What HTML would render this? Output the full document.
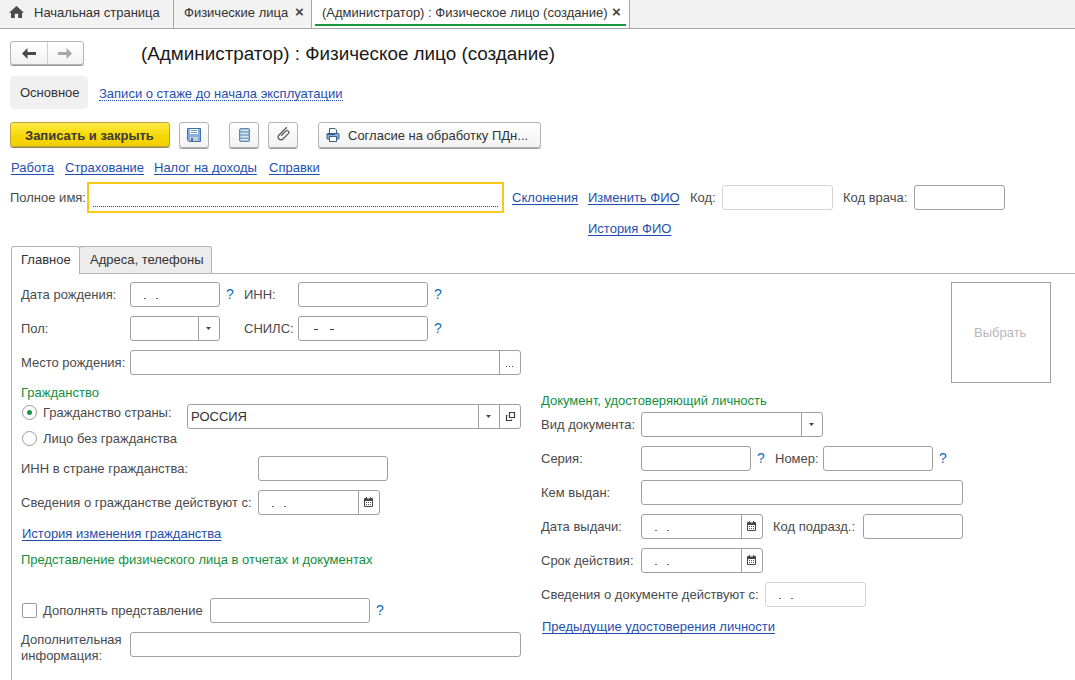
<!DOCTYPE html>
<html><head><meta charset="utf-8">
<style>
*{box-sizing:border-box;margin:0;padding:0}
html,body{width:1075px;height:680px;overflow:hidden;background:#fff}
body{position:relative;font-family:"Liberation Sans",sans-serif;font-size:13px;color:#4a4a4a}
.a{position:absolute;white-space:nowrap;line-height:16px}
.lnk{color:#1f4fae;text-decoration:underline;text-underline-offset:2px;text-decoration-skip-ink:none}
.grn{color:#10903f}
.q{color:#0f6cc2;font-size:14px}
.inp{position:absolute;border:1px solid #a0a0a0;border-radius:3px;background:#fff}
.dd{position:absolute;top:0;bottom:0;border-left:1px solid #a0a0a0}
.btn{position:absolute;border:1px solid #b4b4b4;border-radius:3px;background:linear-gradient(#fff,#f2f2f2);box-shadow:0 1px 0 #9a9a9a}
.dot{position:absolute;width:2px;height:1px;background:#6a6a6a}
.tri{position:absolute;left:7px;top:10px;width:5px;height:3px;background:#444;clip-path:polygon(0 0,100% 0,50% 100%)}
</style></head><body>

<!-- tab bar -->
<div style="position:absolute;left:0;top:0;width:1075px;height:29px;background:#f2f2f2;border-bottom:1px solid #a6a6a6"></div>
<div style="position:absolute;left:312px;top:0;width:317px;height:28px;background:#fff"></div>
<div style="position:absolute;left:173px;top:0;width:1px;height:28px;background:#a6a6a6"></div>
<div style="position:absolute;left:311px;top:0;width:1px;height:28px;background:#a6a6a6"></div>
<div style="position:absolute;left:629px;top:0;width:1px;height:28px;background:#a6a6a6"></div>
<div style="position:absolute;left:315px;top:24px;width:311px;height:2px;background:#1a9642"></div>
<svg style="position:absolute;left:9px;top:6px" width="15" height="12" viewBox="0 0 15 12"><path d="M7.5 0 L15 6.8 H13 V12 H9.2 V7.7 H5.8 V12 H2 V6.8 H0 Z" fill="#4a4a4a"/></svg>
<div class="a" style="left:34px;top:5px;color:#333">Начальная страница</div>
<div class="a" style="left:184px;top:5px;color:#333">Физические лица</div>
<div class="a" style="left:295px;top:4px;color:#444;font-size:15px;font-weight:bold">×</div>
<div class="a" style="left:322px;top:5px;color:#333">(Администратор) : Физическое лицо (создание)</div>
<div class="a" style="left:612px;top:4px;color:#444;font-size:15px;font-weight:bold">×</div>

<!-- nav -->
<div class="btn" style="left:10px;top:41px;width:74px;height:24px"></div>
<div style="position:absolute;left:47px;top:42px;width:1px;height:22px;background:#d0d0d0"></div>
<svg style="position:absolute;left:22px;top:48px" width="14" height="11" viewBox="0 0 14 11"><path d="M0 5.5 L5.5 0 V4 H14 V7 H5.5 V11 Z" fill="#4a4a4a"/></svg>
<svg style="position:absolute;left:58px;top:48px" width="14" height="11" viewBox="0 0 14 11"><path d="M14 5.5 L8.5 0 V4 H0 V7 H8.5 V11 Z" fill="#a6a6a6"/></svg>
<div class="a" style="left:141px;top:43px;font-size:18.85px;line-height:22px;color:#1a1a1a">(Администратор) : Физическое лицо (создание)</div>

<div style="position:absolute;left:10px;top:76px;width:78px;height:33px;background:#f0f0f0;border-radius:4px"></div>
<div class="a" style="left:20px;top:85px;color:#333">Основное</div>
<div class="a" style="left:99px;top:87px;color:#1f4fae;border-bottom:1px dotted #1f4fae;line-height:13px">Записи о стаже до начала эксплуатации</div>

<!-- command bar -->
<div style="position:absolute;left:10px;top:122px;width:160px;height:25px;border:1px solid #bba23a;border-radius:3px;background:linear-gradient(#ffec4a,#f7d600 60%,#f2d000);box-shadow:0 1px 0 #9a8a50"></div>
<div class="a" style="left:25px;top:128px;font-weight:bold;color:#3a3a3a">Записать и закрыть</div>
<div class="btn" style="left:179px;top:122px;width:30px;height:26px"></div>
<div class="btn" style="left:229px;top:122px;width:30px;height:26px"></div>
<div class="btn" style="left:268px;top:122px;width:30px;height:26px"></div>
<div class="btn" style="left:318px;top:122px;width:223px;height:26px"></div>

<svg style="position:absolute;left:187px;top:128px" width="14" height="14" viewBox="0 0 14 14">
<path d="M0.5 0.5 H13.5 V13.5 H2 L0.5 12 Z" fill="#86aee6" stroke="#3f6eb0" stroke-width="1"/>
<rect x="3" y="1" width="8" height="5" fill="#fff"/>
<rect x="4" y="2" width="6" height="1" fill="#7b97b8"/>
<rect x="4" y="4" width="6" height="1" fill="#7b97b8"/>
<rect x="3" y="9" width="8" height="4" fill="#c9cfcb"/>
<rect x="4" y="10" width="2" height="3" fill="#3f6eb0"/>
</svg>
<svg style="position:absolute;left:239px;top:128px" width="11" height="14" viewBox="0 0 11 14">
<rect x="0.5" y="0.5" width="10" height="13" rx="1.5" fill="#86a6c6" stroke="#5f86ad"/>
<rect x="1.5" y="1.5" width="8" height="1.6" fill="#d2e4f5"/>
<rect x="1.5" y="4.7" width="8" height="1.6" fill="#d2e4f5"/>
<rect x="1.5" y="7.9" width="8" height="1.6" fill="#d2e4f5"/>
<rect x="1.5" y="11" width="8" height="1.6" fill="#d2e4f5"/>
</svg>
<svg style="position:absolute;left:276px;top:127px" width="15" height="15" viewBox="-7.5 -7.5 15 15">
<path transform="rotate(45)" d="M-2.8 -7.5 V3.5 A2.8 2.8 0 0 0 2.8 3.5 V-4 A1.8 1.8 0 0 0 -0.8 -4 V2.5" fill="none" stroke="#5a5a5a" stroke-width="1.3"/>
</svg>
<svg style="position:absolute;left:326px;top:128px" width="14" height="14" viewBox="0 0 14 14">
<path d="M3.5 5 V0.5 H9 L10.5 2 V5" fill="#fff" stroke="#3b6289" stroke-width="1"/>
<rect x="0.5" y="5" width="13" height="6.5" rx="1.5" fill="#2f5f8f"/>
<rect x="1.5" y="7" width="11" height="3.5" fill="#8fb1d2"/>
<rect x="9.5" y="6" width="1" height="1" fill="#fff"/><rect x="11.5" y="6" width="1" height="1" fill="#fff"/>
<rect x="3.5" y="8.5" width="7" height="5" fill="#fff" stroke="#3b6289" stroke-width="1"/>
</svg>
<div class="a" style="left:348px;top:128px;color:#333">Согласие на обработку ПДн...</div>

<!-- links -->
<div class="a lnk" style="left:11px;top:160px">Работа</div>
<div class="a lnk" style="left:65px;top:160px">Страхование</div>
<div class="a lnk" style="left:154px;top:160px">Налог на доходы</div>
<div class="a lnk" style="left:269px;top:160px">Справки</div>

<div class="a" style="left:10px;top:190px">Полное имя:</div>
<div class="inp" style="left:87px;top:182px;width:417px;height:31px;border:2px solid #f9c913;border-radius:0"></div>
<div style="position:absolute;left:93px;top:206px;width:405px;height:1px;background:repeating-linear-gradient(90deg,#f00 0 1px,transparent 1px 2px)"></div>
<div class="a lnk" style="left:512px;top:190px">Склонения</div>
<div class="a lnk" style="left:588px;top:190px">Изменить ФИО</div>
<div class="a" style="left:690px;top:190px">Код:</div>
<div class="inp" style="left:722px;top:185px;width:111px;height:25px;border-color:#d4d4d4"></div>
<div class="a" style="left:843px;top:190px">Код врача:</div>
<div class="inp" style="left:914px;top:185px;width:91px;height:25px"></div>
<div class="a lnk" style="left:588px;top:221px">История ФИО</div>

<!-- tabs -->
<div style="position:absolute;left:11px;top:273px;width:1px;height:407px;background:#b4b4b4"></div>
<div style="position:absolute;left:79px;top:273px;width:996px;height:1px;background:#b4b4b4"></div>
<div style="position:absolute;left:11px;top:246px;width:69px;height:28px;border:1px solid #b4b4b4;border-bottom:none;border-radius:3px 3px 0 0;background:#fff"></div>
<div style="position:absolute;left:79px;top:246px;width:133px;height:27px;border:1px solid #b4b4b4;border-bottom:none;border-radius:3px 3px 0 0;background:#ececec"></div>
<div class="a" style="left:21px;top:252px;color:#333">Главное</div>
<div class="a" style="left:90px;top:252px;color:#333">Адреса, телефоны</div>


<!-- main tab content -->
<div class="a" style="left:21px;top:287px">Дата рождения:</div>
<div class="inp" style="left:130px;top:282px;width:90px;height:25px"></div>

<div class="a q" style="left:226px;top:286px">?</div>
<div class="a" style="left:244px;top:287px">ИНН:</div>
<div class="inp" style="left:298px;top:282px;width:130px;height:25px"></div>
<div class="a q" style="left:434px;top:286px">?</div>

<div class="a" style="left:21px;top:321px">Пол:</div>
<div class="inp" style="left:130px;top:316px;width:90px;height:25px"><div class="dd" style="left:67px;width:21px"><div class="tri"></div></div></div>
<div class="a" style="left:244px;top:321px">СНИЛС:</div>
<div class="inp" style="left:298px;top:316px;width:130px;height:25px"></div>

<div class="a q" style="left:434px;top:320px">?</div>

<div class="a" style="left:21px;top:355px">Место рождения:</div>
<div class="inp" style="left:130px;top:350px;width:391px;height:25px"><div class="dd" style="left:368px;width:21px"></div></div>

<div style="position:absolute;left:951px;top:282px;width:100px;height:101px;border:1px solid #a0a0a0"></div>
<div class="a" style="left:974px;top:325px;color:#b8b8b8">Выбрать</div>

<div class="a grn" style="left:21px;top:385px">Гражданство</div>
<div style="position:absolute;left:22px;top:405px;width:15px;height:15px;border:1px solid #9a9a9a;border-radius:50%;background:#fff"></div>
<div style="position:absolute;left:27px;top:410px;width:5px;height:5px;border-radius:50%;background:#1a9642"></div>
<div class="a" style="left:43px;top:405px">Гражданство страны:</div>
<div class="inp" style="left:187px;top:404px;width:334px;height:25px"><div class="dd" style="left:290px;width:21px"><div class="tri"></div></div><div class="dd" style="left:311px;width:21px"></div></div>
<svg style="position:absolute;left:505px;top:411px" width="11" height="11" viewBox="0 0 11 11"><path d="M4.5 1.5 H9.5 V6.5 H4.5 Z M2.5 4.5 H1.5 V9.5 H6.5 V8.5" fill="none" stroke="#3a3a3a" stroke-width="1.2"/></svg>
<div class="a" style="left:191px;top:409px;color:#333">РОССИЯ</div>
<div style="position:absolute;left:22px;top:431px;width:15px;height:15px;border:1px solid #9a9a9a;border-radius:50%;background:#fff"></div>
<div class="a" style="left:43px;top:431px">Лицо без гражданства</div>

<div class="a" style="left:21px;top:461px">ИНН в стране гражданства:</div>
<div class="inp" style="left:258px;top:456px;width:130px;height:25px"></div>
<div class="a" style="left:21px;top:495px">Сведения о гражданстве действуют с:</div>
<div class="inp" style="left:258px;top:490px;width:122px;height:25px"><div class="dd" style="left:99px;width:21px"></div></div>

<div class="a lnk" style="left:22px;top:526px">История изменения гражданства</div>
<div class="a grn" style="left:21px;top:552px">Представление физического лица в отчетах и документах</div>

<div style="position:absolute;left:22px;top:603px;width:15px;height:15px;border:1px solid #9a9a9a;border-radius:2px;background:#fff"></div>
<div class="a" style="left:43px;top:603px">Дополнять представление</div>
<div class="inp" style="left:210px;top:598px;width:160px;height:25px"></div>
<div class="a q" style="left:376px;top:602px">?</div>
<div class="a" style="left:21px;top:632px">Дополнительная<br>информация:</div>
<div class="inp" style="left:130px;top:632px;width:391px;height:25px"></div>

<!-- right column -->
<div class="a grn" style="left:541px;top:393px">Документ, удостоверяющий личность</div>
<div class="a" style="left:541px;top:417px">Вид документа:</div>
<div class="inp" style="left:641px;top:412px;width:182px;height:25px"><div class="dd" style="left:159px;width:21px"><div class="tri"></div></div></div>
<div class="a" style="left:541px;top:451px">Серия:</div>
<div class="inp" style="left:641px;top:446px;width:110px;height:25px"></div>
<div class="a q" style="left:757px;top:450px">?</div>
<div class="a" style="left:775px;top:451px">Номер:</div>
<div class="inp" style="left:823px;top:446px;width:110px;height:25px"></div>
<div class="a q" style="left:939px;top:450px">?</div>
<div class="a" style="left:541px;top:485px">Кем выдан:</div>
<div class="inp" style="left:641px;top:480px;width:322px;height:25px"></div>
<div class="a" style="left:541px;top:519px">Дата выдачи:</div>
<div class="inp" style="left:641px;top:514px;width:122px;height:25px"><div class="dd" style="left:99px;width:21px"></div></div>

<div class="a" style="left:773px;top:519px">Код подразд.:</div>
<div class="inp" style="left:863px;top:514px;width:100px;height:25px"></div>
<div class="a" style="left:541px;top:553px">Срок действия:</div>
<div class="inp" style="left:641px;top:548px;width:122px;height:25px"><div class="dd" style="left:99px;width:21px"></div></div>

<div class="a" style="left:541px;top:587px">Сведения о документе действуют с:</div>
<div class="inp" style="left:765px;top:582px;width:101px;height:25px;border-color:#d4d4d4"></div>

<div class="a lnk" style="left:542px;top:619px">Предыдущие удостоверения личности</div>

<svg style="position:absolute;left:364px;top:497px" width="9" height="10" viewBox="0 0 9 10"><rect x="0" y="1" width="9" height="9" rx="1" fill="#444"/><rect x="1" y="4" width="7" height="5" fill="#fff"/><g fill="#555"><rect x="2" y="5" width="1" height="1"/><rect x="4" y="5" width="1" height="1"/><rect x="6" y="5" width="1" height="1"/><rect x="2" y="7" width="1" height="1"/><rect x="4" y="7" width="1" height="1"/><rect x="6" y="7" width="1" height="1"/></g><rect x="2" y="0" width="1" height="2" fill="#444"/><rect x="6" y="0" width="1" height="2" fill="#444"/><rect x="3" y="1" width="3" height="1" fill="#fff" opacity=".5"/></svg><svg style="position:absolute;left:747px;top:521px" width="9" height="10" viewBox="0 0 9 10"><rect x="0" y="1" width="9" height="9" rx="1" fill="#444"/><rect x="1" y="4" width="7" height="5" fill="#fff"/><g fill="#555"><rect x="2" y="5" width="1" height="1"/><rect x="4" y="5" width="1" height="1"/><rect x="6" y="5" width="1" height="1"/><rect x="2" y="7" width="1" height="1"/><rect x="4" y="7" width="1" height="1"/><rect x="6" y="7" width="1" height="1"/></g><rect x="2" y="0" width="1" height="2" fill="#444"/><rect x="6" y="0" width="1" height="2" fill="#444"/><rect x="3" y="1" width="3" height="1" fill="#fff" opacity=".5"/></svg><svg style="position:absolute;left:747px;top:555px" width="9" height="10" viewBox="0 0 9 10"><rect x="0" y="1" width="9" height="9" rx="1" fill="#444"/><rect x="1" y="4" width="7" height="5" fill="#fff"/><g fill="#555"><rect x="2" y="5" width="1" height="1"/><rect x="4" y="5" width="1" height="1"/><rect x="6" y="5" width="1" height="1"/><rect x="2" y="7" width="1" height="1"/><rect x="4" y="7" width="1" height="1"/><rect x="6" y="7" width="1" height="1"/></g><rect x="2" y="0" width="1" height="2" fill="#444"/><rect x="6" y="0" width="1" height="2" fill="#444"/><rect x="3" y="1" width="3" height="1" fill="#fff" opacity=".5"/></svg>
<div class="dot" style="left:144px;top:298px"></div><div class="dot" style="left:156px;top:298px"></div><div class="dot" style="left:272px;top:506px"></div><div class="dot" style="left:284px;top:506px"></div><div class="dot" style="left:655px;top:530px"></div><div class="dot" style="left:667px;top:530px"></div><div class="dot" style="left:655px;top:564px"></div><div class="dot" style="left:667px;top:564px"></div><div class="dot" style="left:779px;top:598px"></div><div class="dot" style="left:791px;top:598px"></div><div class="dot" style="left:314px;top:329px;width:4px;background:#444"></div><div class="dot" style="left:330px;top:329px;width:4px;background:#444"></div>
<div class="dot" style="left:506px;top:366px;width:1px;background:#444"></div><div class="dot" style="left:509px;top:366px;width:1px;background:#444"></div><div class="dot" style="left:512px;top:366px;width:1px;background:#444"></div>
</body></html>
